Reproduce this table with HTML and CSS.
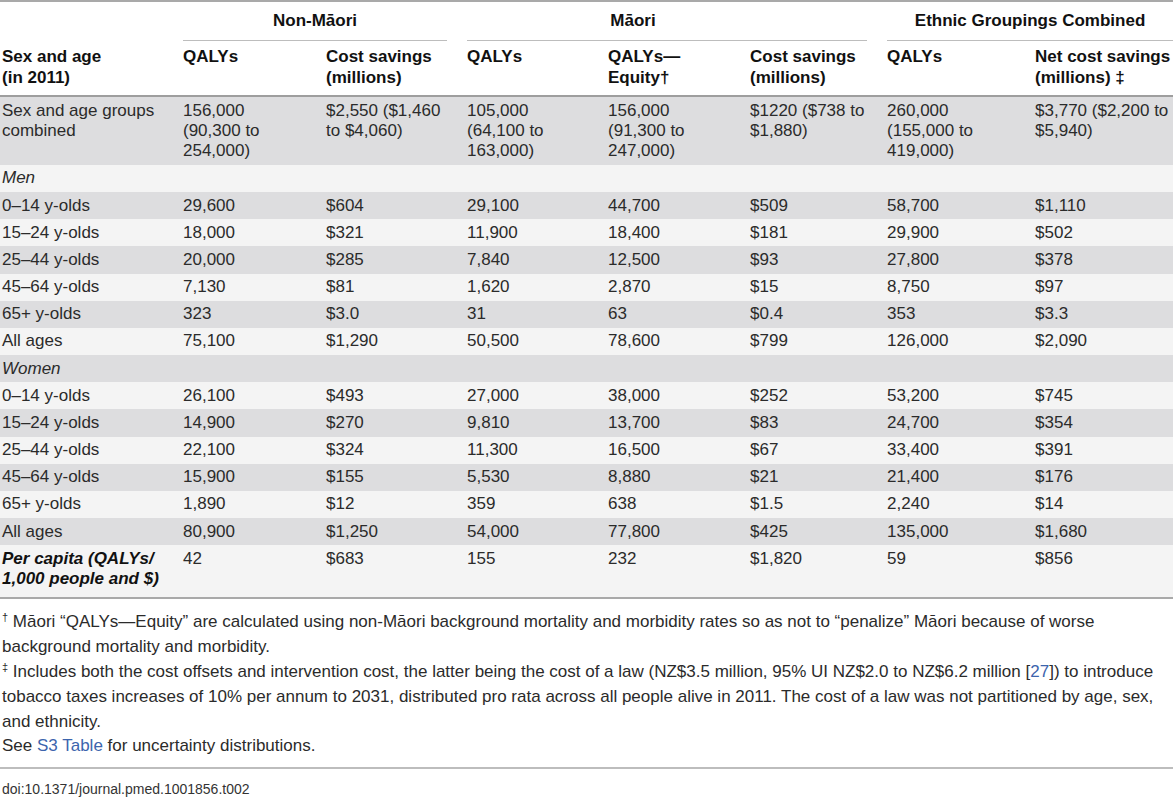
FILE: index.html
```html
<!DOCTYPE html>
<html>
<head>
<meta charset="utf-8">
<link rel="stylesheet" href="styles.css">
</head>
<body>
<div class="wrap">
<table class="data">
  <colgroup>
    <col style="width:181px"><col style="width:143px"><col style="width:141px"><col style="width:141px"><col style="width:142px"><col style="width:137px"><col style="width:148px"><col style="width:140px">
  </colgroup>
  <thead>
    <tr class="groups">
      <th></th>
      <th colspan="2" class="grp"><div class="gline">Non-Māori</div></th>
      <th colspan="3" class="grp"><div class="gline maori">Māori</div></th>
      <th colspan="2" class="grp last"><div class="gline">Ethnic Groupings Combined</div></th>
    </tr>
    <tr class="cols">
      <th>Sex and age<br>(in 2011)</th>
      <th>QALYs</th>
      <th>Cost savings<br>(millions)</th>
      <th>QALYs</th>
      <th>QALYs—<br>Equity†</th>
      <th>Cost savings<br>(millions)</th>
      <th>QALYs</th>
      <th>Net cost savings<br>(millions) ‡</th>
    </tr>
  </thead>
  <tbody>
    <tr class="dark"><td>Sex and age groups combined</td><td>156,000 (90,300 to 254,000)</td><td>$2,550 ($1,460 to $4,060)</td><td>105,000 (64,100 to 163,000)</td><td>156,000 (91,300 to 247,000)</td><td>$1220 ($738 to $1,880)</td><td>260,000 (155,000 to 419,000)</td><td>$3,770 ($2,200 to $5,940)</td></tr>
    <tr class="light"><td class="it">Men</td><td></td><td></td><td></td><td></td><td></td><td></td><td></td></tr>
    <tr class="dark"><td>0–14 y-olds</td><td>29,600</td><td>$604</td><td>29,100</td><td>44,700</td><td>$509</td><td>58,700</td><td>$1,110</td></tr>
    <tr class="light"><td>15–24 y-olds</td><td>18,000</td><td>$321</td><td>11,900</td><td>18,400</td><td>$181</td><td>29,900</td><td>$502</td></tr>
    <tr class="dark"><td>25–44 y-olds</td><td>20,000</td><td>$285</td><td>7,840</td><td>12,500</td><td>$93</td><td>27,800</td><td>$378</td></tr>
    <tr class="light"><td>45–64 y-olds</td><td>7,130</td><td>$81</td><td>1,620</td><td>2,870</td><td>$15</td><td>8,750</td><td>$97</td></tr>
    <tr class="dark"><td>65+ y-olds</td><td>323</td><td>$3.0</td><td>31</td><td>63</td><td>$0.4</td><td>353</td><td>$3.3</td></tr>
    <tr class="light"><td>All ages</td><td>75,100</td><td>$1,290</td><td>50,500</td><td>78,600</td><td>$799</td><td>126,000</td><td>$2,090</td></tr>
    <tr class="dark"><td class="it">Women</td><td></td><td></td><td></td><td></td><td></td><td></td><td></td></tr>
    <tr class="light"><td>0–14 y-olds</td><td>26,100</td><td>$493</td><td>27,000</td><td>38,000</td><td>$252</td><td>53,200</td><td>$745</td></tr>
    <tr class="dark"><td>15–24 y-olds</td><td>14,900</td><td>$270</td><td>9,810</td><td>13,700</td><td>$83</td><td>24,700</td><td>$354</td></tr>
    <tr class="light"><td>25–44 y-olds</td><td>22,100</td><td>$324</td><td>11,300</td><td>16,500</td><td>$67</td><td>33,400</td><td>$391</td></tr>
    <tr class="dark"><td>45–64 y-olds</td><td>15,900</td><td>$155</td><td>5,530</td><td>8,880</td><td>$21</td><td>21,400</td><td>$176</td></tr>
    <tr class="light"><td>65+ y-olds</td><td>1,890</td><td>$12</td><td>359</td><td>638</td><td>$1.5</td><td>2,240</td><td>$14</td></tr>
    <tr class="dark"><td>All ages</td><td>80,900</td><td>$1,250</td><td>54,000</td><td>77,800</td><td>$425</td><td>135,000</td><td>$1,680</td></tr>
    <tr class="light percap"><td class="bi">Per capita (QALYs/ 1,000 people and $)</td><td>42</td><td>$683</td><td>155</td><td>232</td><td>$1,820</td><td>59</td><td>$856</td></tr>
  </tbody>
</table>
<div class="notes">
  <p><sup>†</sup> Māori “QALYs—Equity” are calculated using non-Māori background mortality and morbidity rates so as not to “penalize” Māori because of worse background mortality and morbidity.</p>
  <p><sup>‡</sup> Includes both the cost offsets and intervention cost, the latter being the cost of a law (NZ$3.5 million, 95% UI NZ$2.0 to NZ$6.2 million [<a href="#">27</a>]) to introduce tobacco taxes increases of 10% per annum to 2031, distributed pro rata across all people alive in 2011. The cost of a law was not partitioned by age, sex, and ethnicity.</p>
  <p class="see">See <a href="#">S3 Table</a> for uncertainty distributions.</p>
</div>
<div class="doi">doi:10.1371/journal.pmed.1001856.t002</div>
</div>
</body>
</html>
```

FILE: styles.css
```css
html, body {
  margin: 0;
  padding: 0;
  background: #ffffff;
}
.wrap {
  width: 1173px;
  font-family: "Liberation Sans", Arial, sans-serif;
  color: #2b2b2b;
}
.data {
  width: 1173px;
  border-collapse: collapse;
  table-layout: fixed;
  border-top: 2px solid #a9a9a9;
  border-bottom: 2px solid #a9a9a9;
  font-size: 17px;
}
.data th {
  font-weight: bold;
  color: #111;
  text-align: left;
  vertical-align: top;
}
.groups th {
  padding: 9px 0 0 0;
  height: 28px;
}
.groups th.grp {
  padding-left: 2px;
  padding-right: 18px;
}
.groups th.last {
  padding-right: 0;
}
.gline {
  text-align: center;
  border-bottom: 1px solid #bdbdbd;
  line-height: 20px;
  padding-bottom: 9px;
}
.gline.maori {
  padding-right: 68px;
}
.cols th {
  line-height: 20.5px;
  padding: 6px 8px 7px 2px;
  border-bottom: 2px solid #9e9e9e;
}
.cols th:last-child {
  padding-right: 0;
}
.data td {
  line-height: 20.4px;
  padding: 3.5px 20px 3.25px 2px;
  vertical-align: top;
}
.data td:last-child {
  padding-right: 0;
}
tr.percap td {
  padding-bottom: 7.5px;
}
tr.dark td {
  background: #dddddf;
}
tr.light td {
  background: #f4f4f4;
}
td.it {
  font-style: italic;
}
td.bi {
  font-style: italic;
  font-weight: bold;
  color: #111;
}
.notes {
  font-size: 17px;
  line-height: 25px;
  color: #2b2b2b;
  padding: 10px 4px 10px 2px;
  border-bottom: 2px solid #bdbdbd;
}
.notes p {
  margin: 0;
}
.notes sup {
  font-size: 11px;
  vertical-align: 6px;
  line-height: 0;
}
.notes p.see {
  line-height: 23px;
}
.notes a {
  color: #3c64ad;
  text-decoration: none;
}
.doi {
  font-family: "Liberation Sans", Arial, sans-serif;
  font-size: 14px;
  color: #333;
  padding: 11px 0 0 2px;
  line-height: 18px;
}
```
